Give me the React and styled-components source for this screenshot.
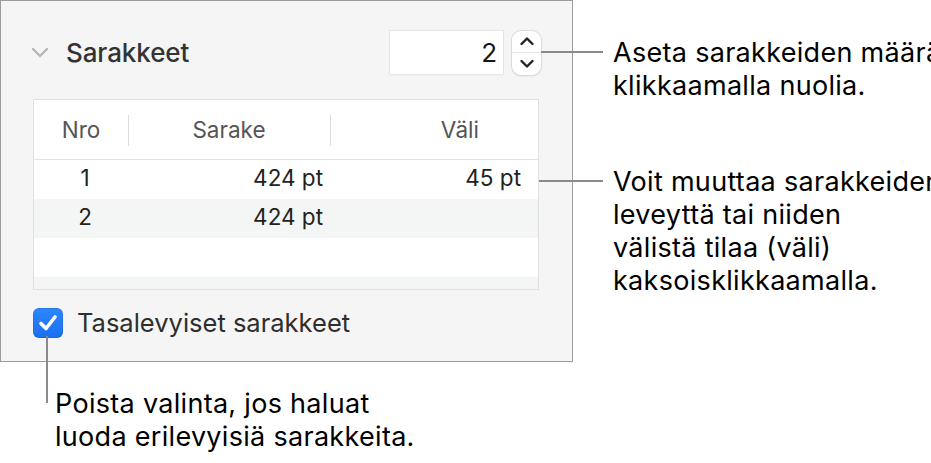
import React from 'react';
import styled, { createGlobalStyle } from 'styled-components';

const GlobalStyle = createGlobalStyle`
  html, body {
    margin: 0;
    padding: 0;
    background: #ffffff;
    overflow: hidden;
  }
  body {
    font-family: Inter, "Noto Sans", "Liberation Sans", sans-serif;
    -webkit-font-smoothing: antialiased;
  }
`;

const Page = styled.div`
  display: grid;
  grid-template-columns: 573px 1fr;
  grid-template-rows: 362px auto;
  width: 931px;
  height: 463px;
`;

const Panel = styled.section`
  box-sizing: border-box;
  width: 573px;
  height: 362px;
  border: 1px solid #9c9c9c;
  background: #f5f5f5;
  padding: 30px 31px 0 32px;
  display: flex;
  flex-direction: column;
`;

const HeaderRow = styled.div`
  display: flex;
  align-items: center;
  height: 43px;
`;

const Disclosure = styled.svg`
  width: 18px;
  height: 11px;
  margin-left: -2px;
  margin-right: 17px;
`;

const Title = styled.h2`
  margin: 0;
  flex: 1;
  font-size: 26px;
  font-weight: 500;
  color: #333333;
  letter-spacing: -0.1px;
`;

const NumberField = styled.div`
  box-sizing: border-box;
  width: 113px;
  height: 43px;
  background: #ffffff;
  box-shadow: 0 0 0 1px #e6e6e6, 0 1px 1px rgba(0, 0, 0, 0.12);
  display: flex;
  align-items: center;
  justify-content: flex-end;
  padding-right: 6px;
  font-size: 26px;
  color: #151515;
`;

const Stepper = styled.div`
  box-sizing: border-box;
  width: 29px;
  height: 44px;
  margin-left: 9px;
  border-radius: 9px;
  background: #ffffff;
  box-shadow: 0 0 0 1px #dcdcdc, 0 1px 2px rgba(0, 0, 0, 0.15);
  display: flex;
  flex-direction: column;
  align-items: center;
  justify-content: space-between;
  padding: 5px 0 6px;
  position: relative;

  &::after {
    content: '';
    position: absolute;
    left: 0;
    right: 0;
    top: 21px;
    height: 1px;
    background: #e8e8e8;
  }
`;

const Table = styled.div`
  box-sizing: border-box;
  margin-top: 25px;
  width: 506px;
  height: 191px;
  border: 1px solid #e0e0e0;
  background: #ffffff;
  overflow: hidden;
`;

const Row = styled.div`
  box-sizing: border-box;
  display: grid;
  grid-template-columns: 94px 202px 1fr;
  align-items: center;
  height: ${(p) => p.$height || 39}px;
  padding-bottom: ${(p) => (p.$head ? 0 : 4)}px;
  background: ${(p) => (p.$alt ? '#f4f5f5' : '#ffffff')};
  border-bottom: ${(p) => (p.$head ? '1px solid #e4e4e4' : 'none')};
  font-size: 22.5px;
  color: ${(p) => (p.$head ? '#555555' : '#222222')};
`;

const Cell = styled.div`
  position: relative;
  display: flex;
  align-items: center;
  height: 100%;
  justify-content: ${(p) => p.$align || 'center'};
  padding-right: ${(p) => p.$pr || 0}px;
  padding-left: ${(p) => p.$pl || 0}px;

  &::before {
    content: '';
    display: ${(p) => (p.$divider ? 'block' : 'none')};
    position: absolute;
    left: 0;
    top: 15px;
    bottom: 13px;
    width: 1px;
    background: #dedede;
  }
`;

const CheckRow = styled.label`
  display: flex;
  align-items: center;
  gap: 14px;
  margin-top: 17px;
  font-size: 25.5px;
  color: #2e2e2e;
`;

const CheckBox = styled.span`
  width: 30px;
  height: 30px;
  border-radius: 6px;
  background: linear-gradient(#2d86ff, #1a6ff0);
  box-shadow: inset 0 0 0 1px rgba(0, 0, 0, 0.08);
  display: flex;
  align-items: center;
  justify-content: center;
`;

const Notes = styled.div`
  padding-left: 40px;
  display: flex;
  flex-direction: column;
`;

const Note = styled.p`
  position: relative;
  margin: ${(p) => p.$top}px 0 0 0;
  font-size: 27px;
  letter-spacing: 0.3px;
  line-height: 33px;
  color: #000000;
  white-space: nowrap;

  &::before {
    content: '';
    position: absolute;
    left: -${(p) => p.$lead}px;
    width: ${(p) => p.$lead - 10}px;
    top: 15px;
    height: 2px;
    background: #8a8a8a;
  }
`;

const BottomNote = styled.p`
  position: relative;
  margin: 25px 0 0 55px;
  font-size: 27px;
  letter-spacing: 0.3px;
  line-height: 33px;
  color: #000000;
  white-space: nowrap;

  &::before {
    content: '';
    position: absolute;
    left: -9px;
    top: -51px;
    width: 2px;
    height: 67px;
    background: #8a8a8a;
  }
`;

const rows = [
  { nro: '1', col: '424 pt', gap: '45 pt' },
  { nro: '2', col: '424 pt', gap: '' },
  { nro: '', col: '', gap: '' },
  { nro: '', col: '', gap: '' },
];

export default function App() {
  return (
    <>
      <GlobalStyle />
      <Page>
        <Panel>
          <HeaderRow>
            <Disclosure viewBox="0 0 18 11">
              <path d="M2 2 L9 9 L16 2" fill="none" stroke="#b4b4b4" strokeWidth="2.2" strokeLinecap="round" strokeLinejoin="round" />
            </Disclosure>
            <Title>Sarakkeet</Title>
            <NumberField>2</NumberField>
            <Stepper>
              <svg width="16" height="10" viewBox="0 0 16 10">
                <path d="M2.5 8 L8 2.5 L13.5 8" fill="none" stroke="#222" strokeWidth="2.4" strokeLinecap="round" strokeLinejoin="round" />
              </svg>
              <svg width="16" height="10" viewBox="0 0 16 10">
                <path d="M2.5 2 L8 7.5 L13.5 2" fill="none" stroke="#222" strokeWidth="2.4" strokeLinecap="round" strokeLinejoin="round" />
              </svg>
            </Stepper>
          </HeaderRow>
          <Table>
            <Row $head $height={60}>
              <Cell>Nro</Cell>
              <Cell $divider>Sarake</Cell>
              <Cell $divider $align="flex-end" $pr={59}>Väli</Cell>
            </Row>
            {rows.map((r, i) => (
              <Row key={i} $alt={i % 2 === 1}>
                <Cell $pl={8}>{r.nro}</Cell>
                <Cell $align="flex-end" $pr={7}>{r.col}</Cell>
                <Cell $align="flex-end" $pr={17}>{r.gap}</Cell>
              </Row>
            ))}
          </Table>
          <CheckRow>
            <CheckBox>
              <svg width="24" height="24" viewBox="0 0 24 24">
                <path d="M5 12.5 L10 17.5 L19 6" fill="none" stroke="#fff" strokeWidth="3.6" strokeLinecap="round" strokeLinejoin="round" />
              </svg>
            </CheckBox>
            Tasalevyiset sarakkeet
          </CheckRow>
        </Panel>
        <Notes>
          <Note $top={36} $lead={72}>
            Aseta sarakkeiden määrä
            <br />
            klikkaamalla nuolia.
          </Note>
          <Note $top={63} $lead={74}>
            Voit muuttaa sarakkeiden
            <br />
            leveyttä tai niiden
            <br />
            välistä tilaa (väli)
            <br />
            kaksoisklikkaamalla.
          </Note>
        </Notes>
        <div>
          <BottomNote>
            Poista valinta, jos haluat
            <br />
            luoda erilevyisiä sarakkeita.
          </BottomNote>
        </div>
      </Page>
    </>
  );
}
